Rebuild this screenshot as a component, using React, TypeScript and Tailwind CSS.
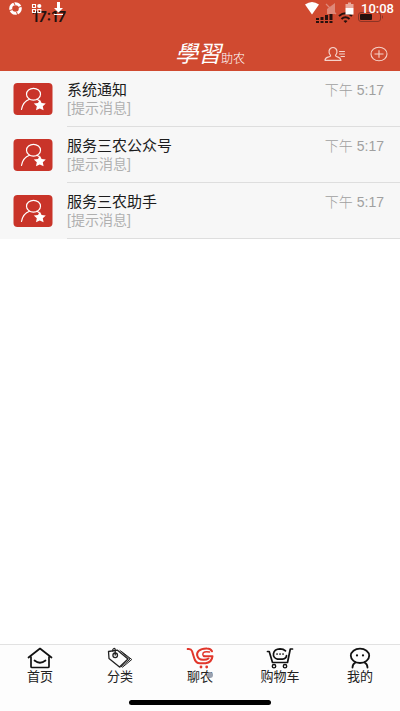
import React from 'react';

interface IMessage {
    title: string;
    preview: string;
    time: string;
}

interface ITab {
    label: string;
    icon: React.ReactNode;
    typing?: boolean;
}

const messages: IMessage[] = [
    { title: "系统通知", preview: "[提示消息]", time: "下午 5:17" },
    { title: "服务三农公众号", preview: "[提示消息]", time: "下午 5:17" },
    { title: "服务三农助手", preview: "[提示消息]", time: "下午 5:17" },
];

const HomeIcon = () => (
    <svg viewBox="0 0 26 22" className="w-[26px] h-[22px]" fill="none" stroke="#111" strokeWidth="1.7" strokeLinecap="round" strokeLinejoin="round">
        <path d="M1.5 10.5 13 1.5 24.5 10.5M4 10v9.5q0 1 1 1h16q1 0 1-1V10" />
        <path d="M7.5 13.5Q13 18 18.5 13.5" />
    </svg>
);

const TagIcon = () => (
    <svg viewBox="0 0 26 22" className="w-[26px] h-[22px]" fill="none" stroke="#222" strokeWidth="1.3" strokeLinecap="round" strokeLinejoin="round">
        <path d="M1.5 4.5 10.5 3.2 21 12 12.5 20 2 11.5Z" />
        <path d="M14.500 4.500 24.800 12.500 15.500 20.200M13 3.500 23 12.200 14 20" strokeWidth="1" />
        <circle cx="8.2" cy="8.3" r="2.3" />
        <path d="M8.2 8V3Q8.2 1 6.8 1.5T5.8 4" />
    </svg>
);

const ChatIcon = () => (
    <svg viewBox="0 0 28 22" className="w-[28px] h-[22px]" fill="none" stroke="#e1362b" strokeWidth="2" strokeLinecap="round" strokeLinejoin="round">
        <path d="M1.7 2Q5 1.500 6 4L8 10.500Q9.500 16.300 14 16.300H19.500Q26 15.500 26.500 9.200H18" />
        <path d="M26 4.300Q24.500 1.500 21 1.500C13 1.300 10.500 5.500 11.200 8.500Q12.300 12.800 17 12.800 20.500 13 22.500 11.500" />
        <path d="M23.500 5Q17 3.800 16.800 7.200 16.800 9 18.500 9.200" strokeWidth="1.500" />
        <circle cx="15" cy="20" r="1.400" fill="#e1362b" stroke="none" />
        <circle cx="20.700" cy="20" r="1.400" fill="#e1362b" stroke="none" />
    </svg>
);

const CartIcon = () => (
    <svg viewBox="0 0 28 22" className="w-[28px] h-[22px]" fill="none" stroke="#111" strokeWidth="1.7" strokeLinecap="round" strokeLinejoin="round">
        <path d="M1.500 4.500H3.200L6.500 15.500H21.500L24.300 2H26.500" />
        <path d="M19.500 3.800Q17.500 1.800 14 1.800C6 2 5.500 11 11.500 12.200H16.500Q20.500 11.500 20.500 8.500" />
        <circle cx="8" cy="19.2" r="1.7" strokeWidth="1.4" />
        <circle cx="19" cy="19.2" r="1.7" strokeWidth="1.4" />
        <path d="M11 7h.1M14 7h.1M17 7h.1" />
    </svg>
);

const MineIcon = () => (
    <svg viewBox="0 0 22 22" className="w-[22px] h-[22px]" fill="none" stroke="#111" strokeWidth="1.8" strokeLinecap="round">
        <ellipse cx="11" cy="8.8" rx="9.2" ry="7.2" />
        <path d="M6.5 15.5Q3.5 17 3.5 20.5M15.5 15.5Q18.5 17 18.5 20.5" />
        <path d="M8 8.3v.2M14 8.3v.2" strokeWidth="2.2" />
    </svg>
);

const tabs: ITab[] = [
    { label: "首页", icon: <HomeIcon /> },
    { label: "分类", icon: <TagIcon /> },
    { label: "聊农", icon: <ChatIcon />, typing: true },
    { label: "购物车", icon: <CartIcon /> },
    { label: "我的", icon: <MineIcon /> },
];

const AvatarIcon = () => (
    <svg viewBox="0 0 40 32" className="w-10 h-8 shrink-0">
        <rect x="0.5" y="0" width="39" height="32" rx="4" fill="#c93429" />
        <g fill="none" stroke="#fff" strokeWidth="1.2" strokeLinecap="round">
            <ellipse cx="20.5" cy="11.2" rx="7" ry="5.9" />
            <path d="M8.5 26.5Q10 18.5 16.5 16.3M24 16.2 26 17.5" />
        </g>
        <path d="m26.8 16.6 1.8 3.5 4.2.4-3 2.8.8 4-3.8-1.9-3.8 1.9.8-4-3-2.8 4.2-.4Z" fill="#fff" />
    </svg>
);

const PhoneStatus = () => (
    <div className="absolute inset-x-0 top-[9px] h-4 flex items-center justify-between pl-8 pr-4">
        <span className="text-[15px] leading-4 font-semibold text-[#24110e] font-['Inter',sans-serif]">17:17</span>
        <svg viewBox="0 0 68 12" className="w-[68px] h-3" fill="#26110e">
            <path d="M0 7h3v2H0zM0 10h3v2H0zM4.5 6h3v3h-3zM4.5 10h3v2h-3zM9 4h3v5H9zM9 10h3v2H9zM13.5 2h3v7h-3zM13.5 10h3v2h-3z" />
            <path d="M23 5Q29.5-.5 36 5" fill="none" stroke="#26110e" strokeWidth="2" />
            <path d="M25.5 8Q29.5 4.5 33.5 8" fill="none" stroke="#26110e" strokeWidth="2" />
            <path d="m27.5 10 2 2 2-2q-2-1.5-4 0Z" />
            <rect x="42.5" y="1.5" width="22" height="9" rx="2.5" fill="none" stroke="#8c3425" />
            <rect x="44" y="3" width="12" height="6" rx="1" />
            <path d="M66 4q2 2 0 4Z" fill="#8c3425" />
        </svg>
    </div>
);

const SystemStatus = () => (
    <div className="absolute inset-x-0 top-0 h-[18px] flex items-center justify-between pl-2 pr-1.5">
        <svg viewBox="0 0 60 18" className="w-[60px] h-[18px]">
            <circle cx="7.5" cy="8.5" r="4.8" fill="none" stroke="#fff" strokeWidth="3" />
            <path d="m5 1 2 4M14.500 6 10 7.500M10 16 8.500 12M.5 11 4.500 9.500" stroke="#d04a30" strokeWidth="1" />
            <path d="M24.5 4.500h3v3h-3zM24.500 9.500h3v3h-3zM29.800 9.500h3v3h-3z" fill="none" stroke="#fff" strokeWidth="1.1" />
            <circle cx="31.3" cy="6" r="2.1" fill="#fff" />
            <path d="M49 2h3v6h3l-4.500 4.500L46 8h3z" fill="#fff" />
            <path d="M46 14.5h9" stroke="#fff" />
        </svg>
        <div className="flex items-center">
            <svg viewBox="0 0 56 18" className="w-14 h-[18px]">
                <path d="M0 4.5Q7-.5 14 4.5L7 14.5Z" fill="#fff" />
                <path d="M22 14V9l8-6v11Z" fill="#df8878" />
                <path d="m21 4 10 10" stroke="#df8878" strokeWidth="1.3" />
                <path d="M40.5 4H43V2.5h3V4h2.500v4h-8Z" fill="#e9a99c" />
                <path d="M40.5 8h8v6.500h-8Z" fill="#fff" />
            </svg>
            <span className="text-[13px] leading-4 font-medium text-white font-['Roboto',sans-serif]">10:08</span>
        </div>
    </div>
);

const Header = () => (
    <header className="relative bg-[#d04a30] pt-9">
        <PhoneStatus />
        <SystemStatus />
        <div className="grid grid-cols-[1fr_auto_1fr] items-center h-[35px] px-3">
            <h1 className="col-start-2 flex items-end text-white font-['Noto_Sans_CJK_TC',sans-serif] pl-5 pb-1">
                <span className="text-[23px] leading-8 italic">學習</span>
                <span className="text-[12px] leading-5 font-light">助农</span>
            </h1>
            <div className="flex items-center justify-end gap-6">
                <button type="button" aria-label="联系人">
                    <svg viewBox="0 0 22 16" className="w-[22px] h-4" fill="none" stroke="#f5d3cb" strokeWidth="1.2" strokeLinecap="round" strokeLinejoin="round">
                        <path d="M6.5 9.5C4 7 4.500 1.500 9 1.500S14 7 11.500 9.500Q11.500 10.500 14 11.200T17 14.300H1Q1 12 4 11.200T6.500 9.500Z" />
                        <path d="M15.5 5.500h5M15.500 8h5M17 10.500h3.500" strokeWidth="1" />
                    </svg>
                </button>
                <button type="button" aria-label="添加">
                    <svg viewBox="0 0 18 16" className="w-[18px] h-4" fill="none" stroke="#f5d3cb" strokeWidth="1.1">
                        <ellipse cx="9" cy="8" rx="8" ry="6.8" />
                        <path d="M4.500 8h9M9 4.200v7.600" />
                    </svg>
                </button>
            </div>
        </div>
    </header>
);

const App: React.FC = () => {
    return (
        <div className="min-h-screen flex flex-col bg-white font-['Liberation_Sans','Noto_Sans_CJK_SC',sans-serif]">
            <Header />
            <main className="grow">
                <ul className="bg-[#f7f7f7]">
                    {messages.map((m) => (
                        <li key={m.title} className="flex h-14 pl-[13px]">
                            <div className="flex items-center">
                                <AvatarIcon />
                            </div>
                            <div className="grow flex justify-between ml-[14px] pt-[10px] pr-4 border-b border-[#dedede]">
                                <div>
                                    <h2 className="text-[15px] leading-[18px] text-[#1c1c1c]">{m.title}</h2>
                                    <p className="text-[14px] leading-[18px] text-[#b0b0b0]">{m.preview}</p>
                                </div>
                                <time className="text-[14px] leading-[18px] font-light text-[#a0a0a0]">{m.time}</time>
                            </div>
                        </li>
                    ))}
                </ul>
            </main>
            <footer className="border-t border-[#e2e2e2] bg-[#fdfdfd]">
                <nav className="grid grid-cols-5 pt-[2px]">
                    {tabs.map((tab) => (
                        <button key={tab.label} type="button" className="flex flex-col items-center">
                            {tab.icon}
                            <span className="relative text-[13px] leading-4 text-[#222]">
                                {tab.label}
                                {tab.typing && <span className="absolute right-0 top-[3px] size-1.5 rounded-full bg-gray-400" />}
                            </span>
                        </button>
                    ))}
                </nav>
                <div className="pt-[15px] pb-[6px]">
                    <div className="w-[142px] h-[5px] mx-auto rounded-full bg-black" />
                </div>
            </footer>
        </div>
    );
};

export default App;
